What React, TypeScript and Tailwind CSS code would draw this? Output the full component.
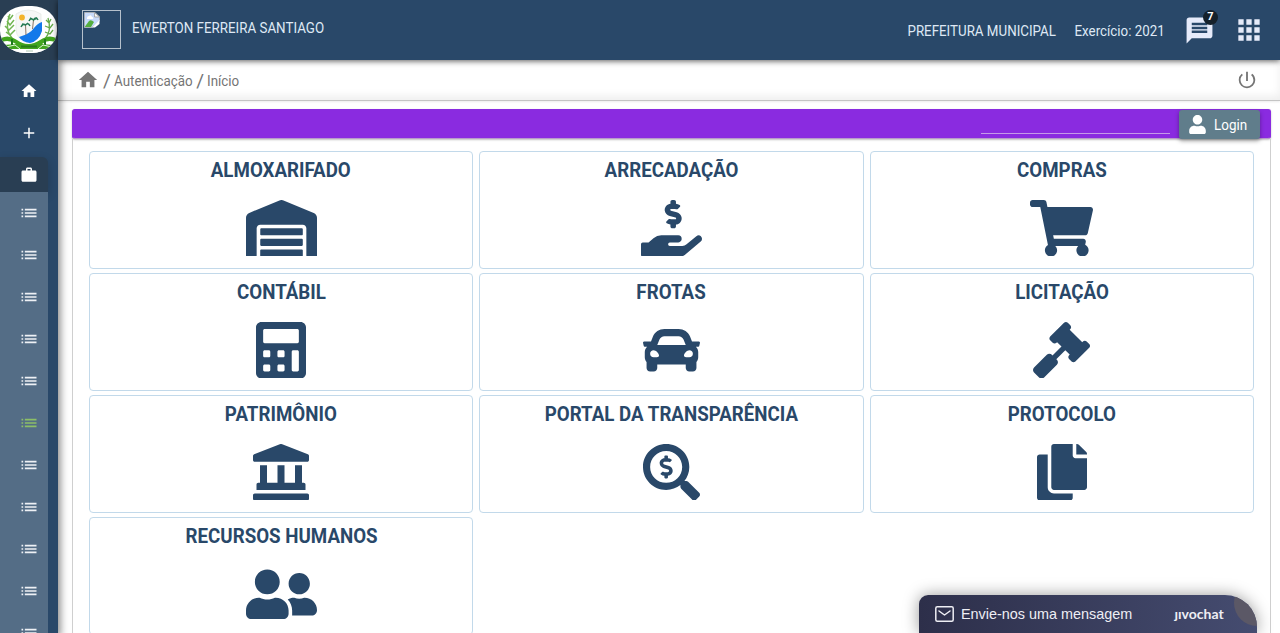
import type { ReactNode } from "react";
import type { IconType } from "react-icons";
import {
  FaCalculator,
  FaCar,
  FaCopy,
  FaGavel,
  FaHandHoldingUsd,
  FaLandmark,
  FaSearchDollar,
  FaShoppingCart,
  FaUser,
  FaUserFriends,
  FaWarehouse,
} from "react-icons/fa";
import { MdAdd, MdApps, MdHome, MdList, MdMessage, MdPowerSettingsNew, MdWork } from "react-icons/md";

const modules: { title: string; Icon: IconType; width: string }[] = [
  { title: "ALMOXARIFADO", Icon: FaWarehouse, width: "w-[71px]" },
  { title: "ARRECADAÇÃO", Icon: FaHandHoldingUsd, width: "w-[61px]" },
  { title: "COMPRAS", Icon: FaShoppingCart, width: "w-[63px]" },
  { title: "CONTÁBIL", Icon: FaCalculator, width: "w-[50px]" },
  { title: "FROTAS", Icon: FaCar, width: "w-[57px]" },
  { title: "LICITAÇÃO", Icon: FaGavel, width: "w-[57px]" },
  { title: "PATRIMÔNIO", Icon: FaLandmark, width: "w-[56px]" },
  { title: "PORTAL DA TRANSPARÊNCIA", Icon: FaSearchDollar, width: "w-[57px]" },
  { title: "PROTOCOLO", Icon: FaCopy, width: "w-[50px]" },
  { title: "RECURSOS HUMANOS", Icon: FaUserFriends, width: "w-[71px]" },
];

function CityCrest() {
  return (
    <svg viewBox="0 0 57 47" className="h-[47px] w-[57px]">
      <defs>
        <clipPath id="crest">
          <rect width="57" height="47" rx="25" ry="22" />
        </clipPath>
      </defs>
      <g clipPath="url(#crest)">
        <rect width="57" height="47" fill="#fff" />
        <path d="M16 8 Q28 0 41 8 V24 Q39 34 28 37 Q17 34 16 24Z" fill="#f6f7f6" stroke="#e3e6e3" strokeWidth=".7" />
        <circle cx="22" cy="11.500" r="2.900" fill="#f3b42c" />
        <path d="M42 16 V25 Q39 35 30 37 Q22 36 19 31 Q30 28 34 22 Q38 17 42 16Z" fill="#1479ea" />
        <path d="M25.500 19 L26 29 M33.500 14 L32.500 23" stroke="#8b7567" strokeWidth="1" />
        <path d="M21 21 Q23 17 25.500 19 Q28 16 30 20 M22 18 L25.500 19 L28 17 M29 15 Q31 11 33.500 14 Q36 10 38 14 M30 12 L33.500 14 L37 12" stroke="#267a54" strokeWidth="1.500" fill="none" />
        <path d="M12 32 Q4 23 10 8 M7 15 L10 19 L14 14 M5 20 L9 24 L14 19 M6 26 L10 29 L15 24 M8 10 L10 13 L13 9" stroke="#72b653" strokeWidth="1.500" fill="none" />
        <path d="M45 33 Q52 25 48 12 M46 14 L49 17 L51 13 M45 20 L50 22 L53 18 M45 26 L50 28 L53 24" stroke="#65aa49" strokeWidth="1.300" fill="none" />
        <path d="M1 32 Q9 28 17 34 Q28 42 40 34 Q49 28 56 32 L55 36 Q47 33 42 38 L53 39 V43 H4 V39 L16 38 Q9 33 2 36Z" fill="#42a51e" />
        <path d="M12 33 V39 M45 33 V39" stroke="#207b1c" strokeWidth="2" />
        <path d="M21 40.500 H37" stroke="#277b19" strokeWidth="2" />
        <path d="M0 43.500 H19 L23 45 H35 L39 43.500 H57 V47 H0Z" fill="#fff" />
        <path d="M6 41 L15 39 L20 43 M38 43 L43 39 L52 41" stroke="#f4fff0" strokeWidth=".9" fill="none" />
        <path d="M26 45 H33" stroke="#8daf91" strokeWidth=".7" />
      </g>
    </svg>
  );
}

function MissingPhoto() {
  return (
    <div className="-mt-[2px] h-[39px] w-[39px] border border-[#b6c1cc] p-px">
      <svg viewBox="0 0 16 16" className="h-4 w-4">
        <path d="M.5 .5H11L15.500 5V9L8 15.500H.5Z" fill="#c8dafa" stroke="#a9b0b8" />
        <path d="M1 14.500 L5 9 Q7 7 10 10 L7 15H1Z" fill="#55ad3e" />
        <path d="M3 6 Q3 4 5 4 Q7 2 8 5 Q10 5 9 7H3Z" fill="#fff" />
        <path d="M15.500 8 L8 15.500 L11 15.500 L15.500 12Z" fill="#fff" />
        <path d="M10.500 .5V5H15.500Z" fill="#f5f5f5" stroke="#9b9b9b" strokeWidth=".8" />
      </svg>
    </div>
  );
}

function SideItem({ children }: { children: ReactNode }) {
  return <div className="flex h-[42px] shrink-0 items-center pl-5">{children}</div>;
}

function Sidebar() {
  return (
    <aside className="z-10 flex h-full w-[58px] shrink-0 flex-col overflow-hidden bg-[#294869] text-white shadow-[0_2px_8px_2px_rgba(0,0,0,0.5)]">
      <div className="flex h-[60px] shrink-0 items-start bg-[#293e53] pt-[6px]">
        <CityCrest />
      </div>
      <div className="pt-[10px]">
        <SideItem><MdHome size={18} /></SideItem>
        <SideItem><MdAdd size={18} /></SideItem>
      </div>
      <div className="mt-[3px] flex h-[35px] w-12 shrink-0 items-center rounded-tr-md bg-[#293e53] pl-5 shadow-[0_3px_10px_rgba(0,0,0,0.2)]">
        <MdWork size={18} />
      </div>
      <div className="w-12 shrink-0 bg-[#546d86] text-[#eef1f5]">
        {Array.from({ length: 11 }, (_, i) => (
          <SideItem key={i}>
            <MdList size={20} className={i === 5 ? "-ml-px text-[#8cbf67]" : "-ml-px"} />
          </SideItem>
        ))}
      </div>
    </aside>
  );
}

function Header() {
  return (
    <header className="z-10 flex h-[60px] shrink-0 items-center bg-[#294869] pr-[15px] pl-6 text-sm text-[#dfe8f5] shadow-[0_1px_6px_rgba(0,0,0,0.65)]">
      <MissingPhoto />
      <span className="-mt-[5px] ml-[11px] origin-left scale-x-[0.954]">EWERTON FERREIRA SANTIAGO</span>
      <span className="ml-auto origin-right scale-x-[0.952] pt-[2px]">PREFEITURA MUNICIPAL</span>
      <span className="ml-[14px] origin-right scale-x-[0.952] pt-[2px]">Exercício: 2021</span>
      <div className="relative ml-[19px]">
        <MdMessage size={31} className="text-[#e6ebfa]" />
        <span className="absolute -top-[5px] left-[19px] flex h-[15px] w-[15px] items-center justify-center rounded-full bg-[#15212b] text-[11px] font-bold text-white">
          7
        </span>
      </div>
      <MdApps size={32} className="ml-[18px] text-[#e6ebfa]" />
    </header>
  );
}

function Breadcrumb() {
  return (
    <nav className="flex h-[41px] shrink-0 items-center border-b border-[#c4c4c4] pr-[22px] pl-[19px] text-sm text-[#757575] shadow-[inset_0_-4px_8px_rgba(0,0,0,0.07),0_1px_2px_rgba(0,0,0,0.08)]">
      <MdHome size={22} className="-mt-px" />
      <span className="ml-1 pt-px text-[19px]">/</span>
      <span className="-mr-1 ml-[3px] origin-left scale-x-[0.955] pt-[2px]">Autenticação</span>
      <span className="ml-1 pt-px text-[19px]">/</span>
      <span className="ml-[3px] origin-left scale-x-[0.955] pt-[2px]">Início</span>
      <MdPowerSettingsNew size={22} className="ml-auto" />
    </nav>
  );
}

function ChatWidget() {
  return (
    <div className="absolute right-[23px] bottom-0 z-20 flex h-[38px] w-[338px] items-center overflow-hidden rounded-tl-[9px] rounded-tr-[32px] bg-linear-to-r from-[#2d2f4a] to-[#454c70] pl-4 font-['Liberation_Sans',sans-serif] text-[15px] text-[#eeeef4] shadow-[0_0_16px_rgba(0,0,0,0.4)]">
      <svg viewBox="0 0 19 16" className="h-4 w-[19px]" fill="none" stroke="currentColor" strokeWidth="1.500" strokeLinecap="round" strokeLinejoin="round">
        <rect x=".8" y=".8" width="17.400" height="14.400" rx="1.500" />
        <path d="M4 5 L9.500 9 L15 5" />
      </svg>
      <span className="-mr-[7px] ml-[7px] origin-left scale-x-[0.96]">Envie-nos uma mensagem</span>
      <span className="ml-[42px] font-['Lato',sans-serif] text-sm font-bold">ȷıvochat</span>
      <span className="absolute -top-[15px] -right-[23px] h-[46px] w-[46px] rounded-full bg-[#5b5866]" />
    </div>
  );
}

export default function App() {
  return (
    <div className="relative flex h-[633px] w-full overflow-hidden bg-white font-['Roboto',sans-serif]">
      <Sidebar />
      <div className="flex min-w-0 flex-1 flex-col">
        <Header />
        <Breadcrumb />
        <main className="flex min-h-0 flex-1 flex-col pt-2 pr-[9px] pl-[14px]">
          <div className="flex h-[30px] shrink-0 justify-end rounded-[3px] border border-[#8a2be0] border-b-[#b99acb] bg-[#8a2be0] pr-[10px] shadow-[0_1px_2px_rgba(0,0,0,0.25)]">
            <div className="mr-[9px] h-[24px] w-[189px] border-b border-[#c49ae9]" />
            <button className="flex h-[29px] w-[81px] items-center rounded-[3px] bg-[#607d8b] pl-[9px] text-sm text-white shadow-[0_2px_4px_rgba(0,0,0,0.35)]">
              <FaUser size={19} />
              <span className="ml-[7px] origin-left scale-x-[0.96]">Login</span>
            </button>
          </div>
          <section className="grid shrink-0 grid-cols-3 gap-x-[6px] gap-y-1 border-x border-x-[#cfcfcf] px-4 pt-3">
            {modules.map(({ title, Icon, width }) => (
              <article key={title} className="flex h-[118px] flex-col items-center rounded-[4px] border border-[#c2d9ea] pt-[3px] text-[#294869]">
                <h2 className="scale-x-[0.936] text-[20px] leading-[30px] font-bold">{title}</h2>
                <Icon preserveAspectRatio="none" className={`mt-[14.5px] h-[56.5px] shrink-0 ${width}`} />
              </article>
            ))}
          </section>
        </main>
      </div>
      <ChatWidget />
    </div>
  );
}
